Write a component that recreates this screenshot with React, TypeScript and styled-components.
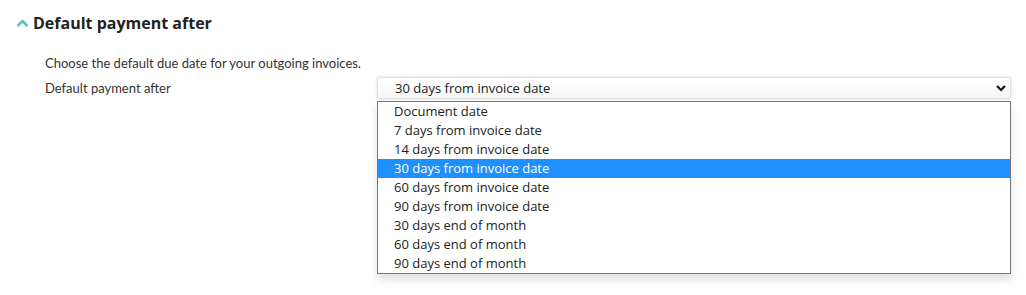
import { createGlobalStyle } from "styled-components";
import styled from "styled-components";

const GlobalStyle = createGlobalStyle`
  body {
    margin: 0;
    background: #ffffff;
    font-family: "Open Sans", sans-serif;
  }
`;

const Page = styled.div`
  width: 1026px;
  height: 295px;
  box-sizing: border-box;
  padding: 12px 15px 0 16px;
`;

const Header = styled.div`
  display: flex;
  align-items: center;
  gap: 4px;
  height: 22px;
`;

const Title = styled.h2`
  margin: 0;
  font-family: "Open Sans", sans-serif;
  font-size: 16px;
  font-weight: 700;
  color: #222222;
  line-height: 22px;
`;

const Body = styled.div`
  padding: 20px 0 0 29px;
`;

const Description = styled.p`
  margin: 0;
  font-family: Lato, sans-serif;
  font-size: 13px;
  color: #333333;
  line-height: 18px;
`;

const Row = styled.div`
  display: flex;
  align-items: center;
  margin-top: 5px;
`;

const Label = styled.label`
  width: 332px;
  font-family: Lato, sans-serif;
  font-size: 13px;
  color: #333333;
`;

const SelectWrap = styled.div`
  position: relative;
  width: 634px;
`;

const SelectBox = styled.div`
  display: flex;
  align-items: center;
  justify-content: space-between;
  height: 22px;
  box-sizing: border-box;
  padding: 0 3px 0 17px;
  border: 1px solid #e2e2e2;
  border-radius: 3px;
  background: linear-gradient(#ffffff, #f6f6f6);
  box-shadow: 0 0 3px rgba(0, 0, 0, 0.18);
  font-size: 13px;
  color: #222222;
`;

const List = styled.ul`
  position: absolute;
  top: 24px;
  left: 0;
  right: 0;
  margin: 0;
  padding: 0;
  list-style: none;
  background: #ffffff;
  border: 1px solid #767676;
  box-shadow: 0 6px 8px rgba(0, 0, 0, 0.12);
`;

const Option = styled.li<{ $selected?: boolean }>`
  height: 19px;
  line-height: 19px;
  padding-left: 16px;
  font-size: 13px;
  color: ${({ $selected }) => ($selected ? "#ffffff" : "#222222")};
  background: ${({ $selected }) => ($selected ? "#1e90ff" : "transparent")};
`;

const options = [
  "Document date",
  "7 days from invoice date",
  "14 days from invoice date",
  "30 days from invoice date",
  "60 days from invoice date",
  "90 days from invoice date",
  "30 days end of month",
  "60 days end of month",
  "90 days end of month",
];

const selected = "30 days from invoice date";

export default function App() {
  return (
    <>
      <GlobalStyle />
      <Page>
        <Header>
          <svg width="13" height="10" viewBox="0 0 13 10">
            <path d="M1.5 8 L6.5 3 L11.5 8" fill="none" stroke="#5bbfb5" strokeWidth="2.6" />
          </svg>
          <Title>Default payment after</Title>
        </Header>
        <Body>
          <Description>Choose the default due date for your outgoing invoices.</Description>
          <Row>
            <Label>Default payment after</Label>
            <SelectWrap>
              <SelectBox>
                <span>{selected}</span>
                <svg width="12" height="8" viewBox="0 0 12 8">
                  <path d="M2 2 L6 6 L10 2" fill="none" stroke="#111" strokeWidth="2.2" />
                </svg>
              </SelectBox>
              <List>
                {options.map((o) => (
                  <Option key={o} $selected={o === selected}>
                    {o}
                  </Option>
                ))}
              </List>
            </SelectWrap>
          </Row>
        </Body>
      </Page>
    </>
  );
}
